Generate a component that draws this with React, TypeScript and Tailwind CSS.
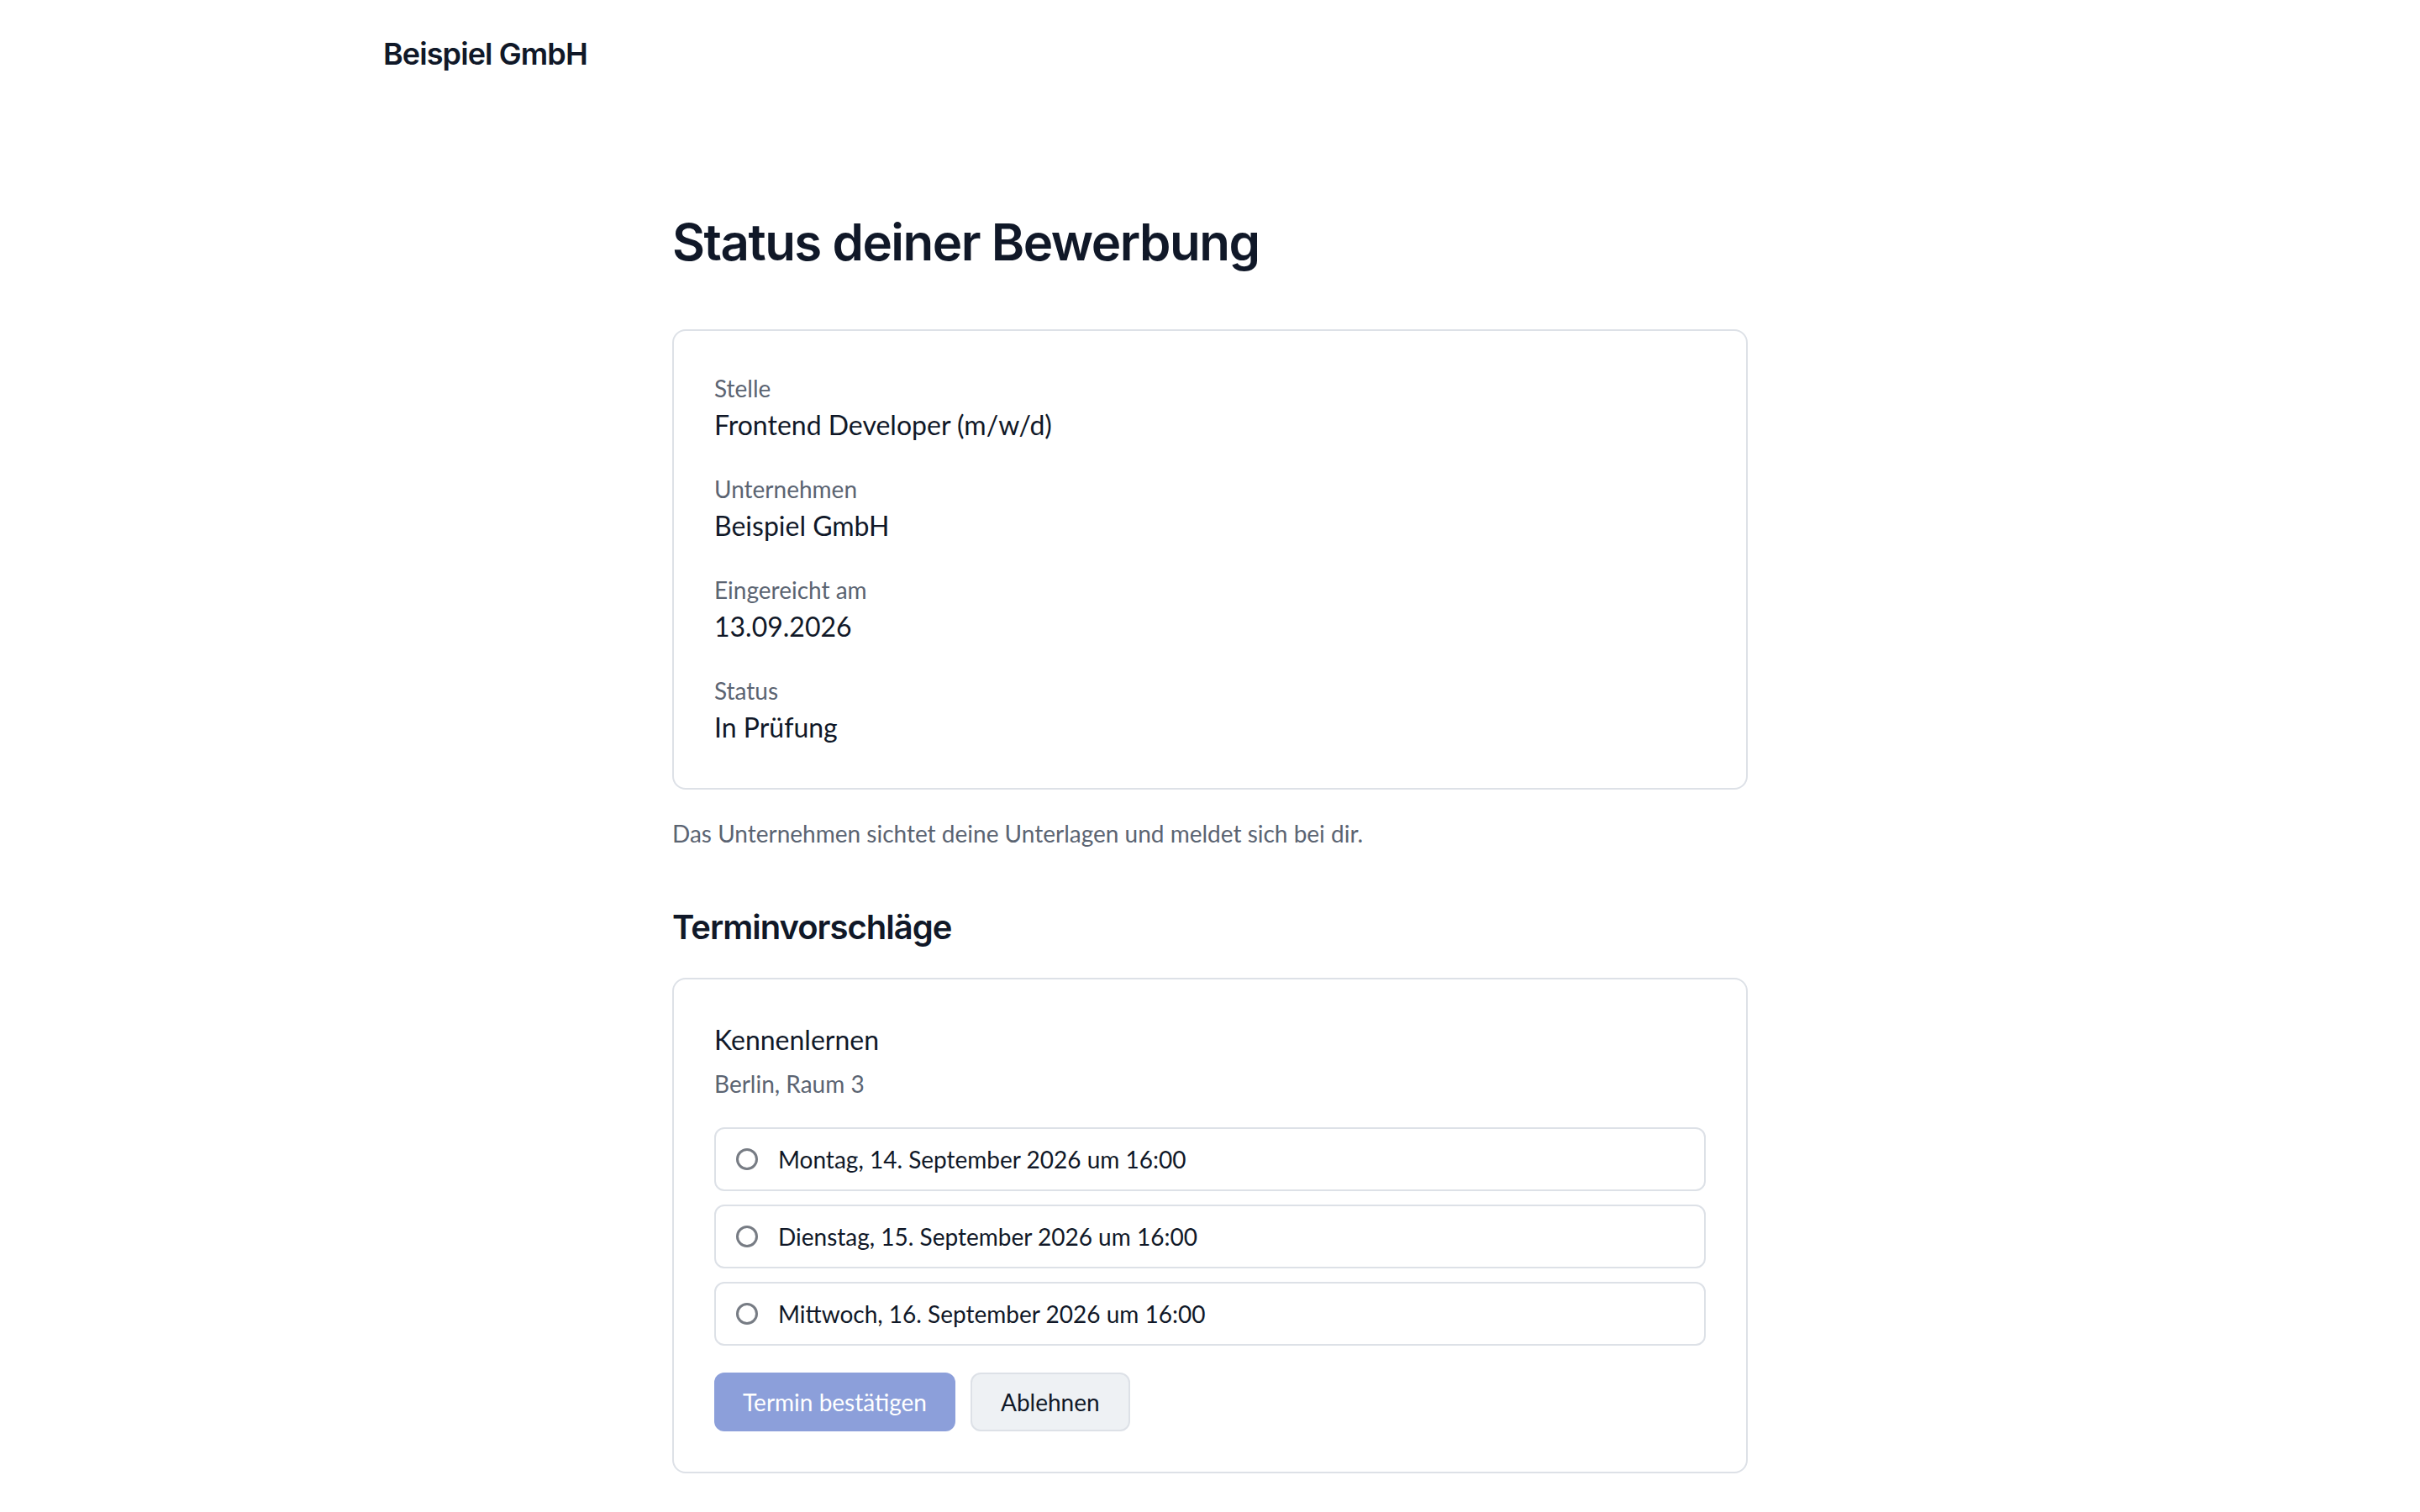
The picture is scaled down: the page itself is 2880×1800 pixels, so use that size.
import React from "react";

const heading = { fontFamily: "Inter, 'Liberation Sans', sans-serif" };

const fields = [
  { label: "Stelle", value: "Frontend Developer (m/w/d)" },
  { label: "Unternehmen", value: "Beispiel GmbH" },
  { label: "Eingereicht am", value: "13.09.2026" },
  { label: "Status", value: "In Prüfung" },
];

const slots = [
  "Montag, 14. September 2026 um 16:00",
  "Dienstag, 15. September 2026 um 16:00",
  "Mittwoch, 16. September 2026 um 16:00",
];

export default function App() {
  return (
    <div
      className="min-h-screen bg-white text-[#101828]"
      style={{ fontFamily: "Lato, 'Open Sans', sans-serif" }}
    >
      <header className="max-w-[2048px] mx-auto px-10 h-32 flex items-center">
        <span className="text-[36px] leading-[56px] font-semibold tracking-tight" style={heading}>
          Beispiel GmbH
        </span>
      </header>

      <main className="max-w-[1280px] mx-auto pt-[120px] pb-20">
        <h1 className="text-[60px] leading-[80px] font-semibold tracking-tight" style={heading}>
          Status deiner Bewerbung
        </h1>

        <section className="mt-16 border-2 border-[#dde1e7] rounded-2xl p-12 flex flex-col gap-8">
          {fields.map((f) => (
            <div key={f.label}>
              <div className="text-[28px] leading-[40px] text-[#5b6472]">{f.label}</div>
              <div className="text-[32px] leading-[48px]">{f.value}</div>
            </div>
          ))}
        </section>

        <p className="mt-8 text-[28px] leading-[40px] text-[#5b6472]">
          Das Unternehmen sichtet deine Unterlagen und meldet sich bei dir.
        </p>

        <h2 className="mt-16 text-[40px] leading-[56px] font-semibold tracking-tight" style={heading}>
          Terminvorschläge
        </h2>

        <section className="mt-8 border-2 border-[#dde1e7] rounded-2xl p-12">
          <div className="text-[32px] leading-[48px]">Kennenlernen</div>
          <div className="mt-2 text-[28px] leading-[40px] text-[#5b6472]">Berlin, Raum 3</div>

          <div className="mt-8 flex flex-col gap-4">
            {slots.map((s) => (
              <label
                key={s}
                className="flex items-center gap-6 border-2 border-[#dde1e7] rounded-xl px-6 py-4 text-[28px] leading-[40px]"
              >
                <span className="w-[26px] h-[26px] rounded-full border-[3px] border-[#777c84] bg-white shrink-0" />
                <span>{s}</span>
              </label>
            ))}
          </div>

          <div className="mt-8 flex gap-[18px]">
            <button className="px-[34px] py-[15px] text-[28px] leading-[40px] rounded-xl bg-[#8c9fda] text-white">
              Termin bestätigen
            </button>
            <button className="px-[34px] py-[13px] text-[28px] leading-[40px] rounded-xl bg-[#eef1f4] border-2 border-[#dde1e7] text-[#101828]">
              Ablehnen
            </button>
          </div>
        </section>
      </main>
    </div>
  );
}
